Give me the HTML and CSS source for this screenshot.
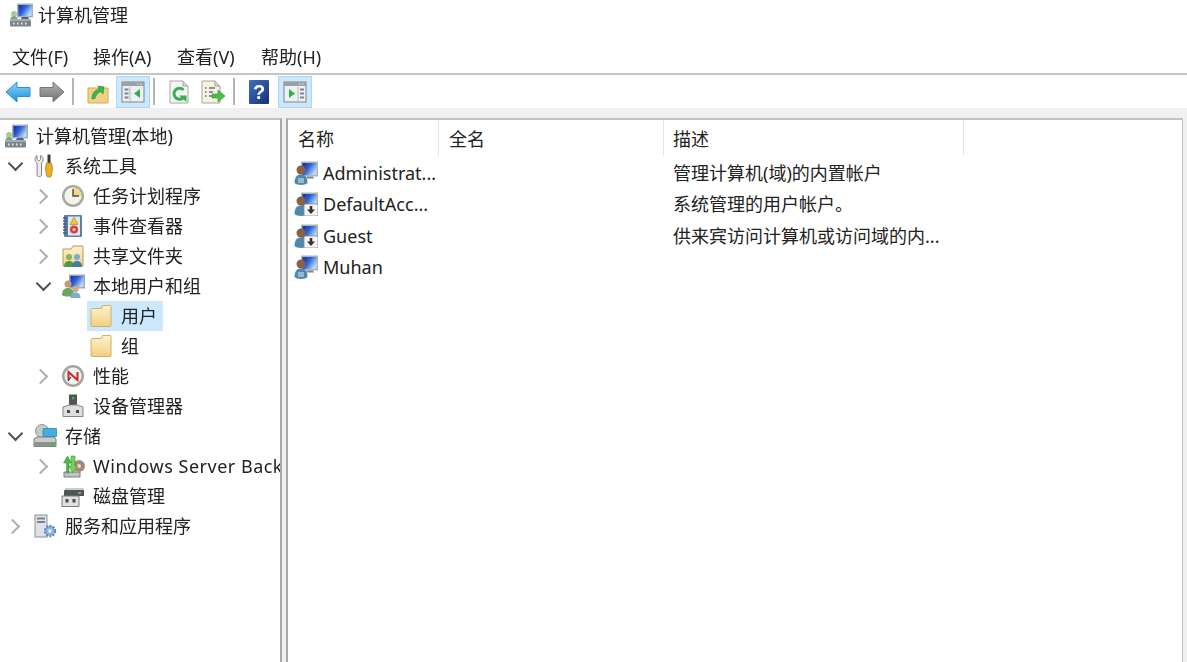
FILE: index.html
```html
<!DOCTYPE html>
<html lang="zh-CN">
  <head>
    <meta charset="utf-8" />
    <meta name="viewport" content="width=device-width, initial-scale=1.0" />
    <title>计算机管理</title>
    <link rel="stylesheet" href="styles.css">
  </head>

  <body>
    <!-- icons, reused with <use> -->
    <svg class="defs" xmlns="http://www.w3.org/2000/svg">
      <defs>
        <linearGradient id="gScreen" x1="0" y1="0" x2="1" y2="0.6">
          <stop offset="0" stop-color="#10289a" />
          <stop offset="0.5" stop-color="#2f66d8" />
          <stop offset="1" stop-color="#c0dbf7" />
        </linearGradient>
        <linearGradient id="gFolder" x1="0" y1="0" x2="0" y2="1">
          <stop offset="0" stop-color="#fdf3cf" />
          <stop offset="1" stop-color="#f1d080" />
        </linearGradient>
        <linearGradient id="gBlue" x1="0" y1="0" x2="0" y2="1">
          <stop offset="0" stop-color="#8fd3fb" />
          <stop offset="1" stop-color="#1c8fe0" />
        </linearGradient>
        <linearGradient id="gGrey" x1="0" y1="0" x2="0" y2="1">
          <stop offset="0" stop-color="#b4b4b4" />
          <stop offset="1" stop-color="#6f6f6f" />
        </linearGradient>
        <linearGradient id="gHelp" x1="0" y1="0" x2="1" y2="1">
          <stop offset="0" stop-color="#3f6fc4" />
          <stop offset="1" stop-color="#182f78" />
        </linearGradient>
      </defs>

      <symbol id="i-computer" viewBox="0 0 24 24">
        <rect x="8" y="0.500" width="16" height="14" fill="#a5b0ba" />
        <rect x="9.500" y="2" width="13" height="11" fill="url(#gScreen)" />
        <path d="M13 14h6l1 2h-8z" fill="#59626b" />
        <circle cx="5" cy="11" r="3" fill="#a8c8a5" />
        <path d="M1.500 16c0-2 2-3 3.500-3s3.500 1 3.500 3z" fill="#7aa57c" />
        <rect x="1" y="16" width="21" height="7.500" rx="1" fill="#79848c" />
        <rect x="1" y="16" width="21" height="2" fill="#a3adb4" />
        <path d="M4 20.500h1.500M8 20.500h1.500M12 20.500h1.500M16 20.500h1.500" stroke="#e6eaec" stroke-width="2" />
      </symbol>

      <symbol id="i-tools" viewBox="0 0 24 24">
        <path d="M4 1.500v4l1.800 1.500 1.800-1.500v-4c2 .8 2.800 2.500 2.600 4.500-.1 1.300-1 2.300-1.700 3v12c0 2-4.400 2-4.400 0V9C2.700 8 2 7 2 5.500 2 3.800 2.700 2.300 4 1.500z" fill="#ececec" stroke="#858585" stroke-width="1" />
        <rect x="14.500" y="0.500" width="3" height="9" fill="#3a3a3a" />
        <path d="M13.500 9h5l1 5-1 8c-.2 1.500-4.800 1.500-5 0l-1-8z" fill="#eaae22" stroke="#b5801a" stroke-width=".8" />
      </symbol>

      <symbol id="i-clock" viewBox="0 0 24 24">
        <circle cx="12" cy="12" r="11" fill="#a9a9a2" />
        <circle cx="12" cy="12" r="8.500" fill="#f6f4ea" />
        <path d="M12 12V3.500A8.500 8.500 0 0 1 20.500 12z" fill="#f4d98b" />
        <path d="M12 5v7h6" fill="none" stroke="#45494d" stroke-width="1.400" />
      </symbol>

      <symbol id="i-event" viewBox="0 0 24 24">
        <rect x="3" y="1" width="18" height="22" rx="1" fill="#5a7fab" />
        <rect x="7" y="2.500" width="12" height="19" fill="#dfe6ee" />
        <path d="M2 4h4M2 7h4M2 10h4M2 13h4M2 16h4M2 19h4" stroke="#4a5d76" stroke-width="1.300" />
        <path d="M13 3l4 7.500H9z" fill="#f0c632" stroke="#a8861a" stroke-width=".6" />
        <circle cx="13" cy="15.500" r="4" fill="#d83f3f" />
        <circle cx="13" cy="15.500" r="1.500" fill="#f7dede" />
      </symbol>

      <symbol id="i-share" viewBox="0 0 24 24">
        <path d="M2 5h8l2-3h10v20H2z" fill="url(#gFolder)" stroke="#b9995a" stroke-width="1" />
        <circle cx="8" cy="13" r="3" fill="#7fb46a" />
        <path d="M3 23c0-4 2-6 5-6s5 2 5 6z" fill="#4f9a49" />
        <circle cx="16" cy="13" r="3" fill="#7fa9c9" />
        <path d="M11 23c0-4 2-6 5-6s5 2 5 6z" fill="#3e7fae" />
      </symbol>

      <symbol id="i-group" viewBox="0 0 24 24">
        <rect x="8" y="0.500" width="16" height="14" fill="#a0aab5" />
        <rect x="9.500" y="2" width="13" height="11" fill="url(#gScreen)" />
        <circle cx="7" cy="10" r="3.500" fill="#c79a6b" />
        <path d="M1 21c0-5 2.500-7 6-7s6 2 6 7c-2 2-10 2-12 0z" fill="#6aa85f" />
        <circle cx="14.500" cy="15" r="3.200" fill="#d3ab83" />
        <path d="M9.500 24c0-4 2-5.500 5-5.500s5 1.500 5 5.500z" fill="#7fadcd" />
      </symbol>

      <symbol id="i-folder" viewBox="0 0 24 24">
        <path d="M2 5.500l1-1h9l1.500-3h8l.5 1V22l-.5.500H3L2 22z" fill="url(#gFolder)" stroke="#cdb06a" stroke-width="1" />
        <path d="M13.500 1.500V5" stroke="#e6d29b" stroke-width="1" />
      </symbol>

      <symbol id="i-perf" viewBox="0 0 24 24">
        <circle cx="12" cy="12" r="11" fill="#a6a6a0" />
        <circle cx="12" cy="12" r="8.500" fill="#f5f3ee" />
        <path d="M7.500 16V8l9 8V8" fill="none" stroke="#c8282c" stroke-width="2" />
        <path d="M7 17l3-4" stroke="#3a3a3a" stroke-width="1.200" />
      </symbol>

      <symbol id="i-device" viewBox="0 0 24 24">
        <rect x="8" y="0.500" width="8" height="11" fill="#4c5550" />
        <rect x="11" y="3" width="2.500" height="2.500" fill="#57a06a" />
        <path d="M2 13l6-2h8l6 2v9.500H2z" fill="#dedede" stroke="#868686" stroke-width="1" />
        <rect x="6" y="16" width="3" height="3" fill="#4a4a4a" />
        <rect x="15" y="16" width="3" height="3" fill="#4a4a4a" />
      </symbol>

      <symbol id="i-storage" viewBox="0 0 24 24">
        <circle cx="9" cy="7" r="6.500" fill="#c4ccc6" stroke="#8d9893" stroke-width="1" />
        <rect x="10" y="4.500" width="14" height="8" rx="1" fill="#3fb0e6" stroke="#2d7fae" stroke-width=".8" />
        <path d="M1 15l3-2h17l2 2v7.500H1z" fill="#c9cdc9" stroke="#777d79" stroke-width="1" />
        <rect x="1" y="18" width="22" height="4.500" fill="#8c938f" />
        <rect x="18" y="19" width="3" height="2.500" fill="#54b14f" />
      </symbol>

      <symbol id="i-backup" viewBox="0 0 24 24">
        <path d="M3 18h16v5H3z" fill="#c4c4c4" stroke="#7a7a7a" stroke-width="1" />
        <circle cx="18" cy="12" r="6" fill="#a48a78" />
        <circle cx="18" cy="12" r="2" fill="#ead9cb" />
        <path d="M5.500 19V9H2.500l4-7 4 7H8v10z" fill="#49bb44" stroke="#2e8a32" stroke-width=".5" />
        <path d="M10 2v10H7.500l4.500 7 4.500-7H14V2z" fill="#74d155" stroke="#2e8a32" stroke-width=".5" />
      </symbol>

      <symbol id="i-disk" viewBox="0 0 24 24">
        <path d="M3 7l2-3h17l1 3v5H3z" fill="#4e5552" />
        <path d="M5 4h17l1 2H4z" fill="#c9cfcb" />
        <rect x="17" y="8" width="3" height="2" fill="#5dbb58" />
        <path d="M1 12h17v10.500H1z" fill="#e0e0e0" stroke="#7a7a7a" stroke-width="1" />
        <rect x="4.500" y="15" width="3" height="3.500" fill="#4a4a4a" />
        <rect x="11.500" y="15" width="3" height="3.500" fill="#4a4a4a" />
      </symbol>

      <symbol id="i-services" viewBox="0 0 24 24">
        <rect x="2" y="1" width="12" height="22" fill="#dfe2e5" stroke="#8a9097" stroke-width="1" />
        <rect x="4" y="3.500" width="8" height="2" fill="#7b828a" />
        <rect x="4" y="7" width="8" height="2" fill="#7b828a" />
        <circle cx="17" cy="17" r="5" fill="#8fb6e6" stroke="#5d88c2" stroke-width="2.400" stroke-dasharray="2 1.200" />
        <circle cx="17" cy="17" r="1.800" fill="#eef4fb" />
      </symbol>

      <symbol id="i-user" viewBox="0 0 24 24">
        <rect x="7" y="0.500" width="17" height="15" fill="#aab4bd" />
        <rect x="8.500" y="2" width="14" height="12" fill="url(#gScreen)" />
        <path d="M13 15.500h6l1 2h-8z" fill="#7c8690" />
        <circle cx="7" cy="9" r="4.500" fill="#8a6242" />
        <path d="M0.500 22c0-6 2.500-8.500 6.500-8.500s6.500 2.500 6.500 8.500c-2 2.500-11 2.500-13 0z" fill="#4e88ad" />
        <path d="M4 17h6v5H4z" fill="#aecfe0" opacity=".7" />
      </symbol>

      <symbol id="i-user-off" viewBox="0 0 24 24">
        <rect x="7" y="0.500" width="17" height="15" fill="#aab4bd" />
        <rect x="8.500" y="2" width="14" height="12" fill="url(#gScreen)" />
        <circle cx="7" cy="9" r="4.500" fill="#8a6242" />
        <path d="M0.500 22c0-6 2.500-8.500 6.500-8.500s6.500 2.500 6.500 8.500c-2 2.500-11 2.500-13 0z" fill="#4e88ad" />
        <rect x="10" y="12" width="14" height="12" rx="1.500" fill="#f4f4f4" stroke="#8a8a8a" stroke-width=".8" />
        <path d="M15.700 14h2.600v3.500H21L17 22l-4-4.500h2.700z" fill="#333" />
      </symbol>

      <symbol id="t-back" viewBox="0 0 26 24">
        <path d="M1 12L12 2v5.500h13v9H12V22z" fill="url(#gBlue)" stroke="#2b8fd6" stroke-width="1" />
      </symbol>
      <symbol id="t-forward" viewBox="0 0 26 24">
        <path d="M25 12L14 2v5.500H1v9h13V22z" fill="url(#gGrey)" stroke="#777" stroke-width="1" />
      </symbol>
      <symbol id="t-up" viewBox="0 0 24 24">
        <path d="M2 8h20v15H2z" fill="#f0d184" stroke="#cfaa5c" stroke-width="1" />
        <path d="M2 8h7l2-2h8l3 2" fill="#f6e2aa" />
        <path d="M6 19c0-6 3-9 7-10l-1-3 6 1-1 7-2-2.500c-3 1-5 3-6 7z" fill="#3db64a" stroke="#2a8a37" stroke-width=".6" />
      </symbol>
      <symbol id="t-left" viewBox="0 0 24 24">
        <rect x="1" y="2" width="22" height="20" fill="#eef1f3" stroke="#8f9599" stroke-width="1.200" />
        <rect x="1" y="2" width="22" height="4" fill="#9aa0a4" />
        <path d="M16 4h1.500M19 4h1.500" stroke="#eee" stroke-width="1.200" />
        <path d="M3.500 9.500h4M3.500 13.500h4M3.500 17.500h4" stroke="#7c848a" stroke-width="2" />
        <path d="M9 7v15" stroke="#b4babe" stroke-width="1" />
        <path d="M19 9v9l-6-4.500z" fill="#2fb045" />
      </symbol>
      <symbol id="t-right" viewBox="0 0 24 24">
        <rect x="1" y="2" width="22" height="20" fill="#eef1f3" stroke="#8f9599" stroke-width="1.200" />
        <rect x="1" y="2" width="22" height="4" fill="#9aa0a4" />
        <path d="M16 4h1.500M19 4h1.500" stroke="#eee" stroke-width="1.200" />
        <path d="M17 9.500h4M17 13.500h4M17 17.500h4" stroke="#7c848a" stroke-width="2" />
        <path d="M15 7v15" stroke="#b4babe" stroke-width="1" />
        <path d="M6 9v9l6-4.500z" fill="#2fb045" />
      </symbol>
      <symbol id="t-refresh" viewBox="0 0 24 24">
        <path d="M3 1h13l5 5v17H3z" fill="#f4f4f4" stroke="#a8a8a8" stroke-width="1" />
        <path d="M16 1v5h5" fill="#d4d4d4" stroke="#a8a8a8" stroke-width="1" />
        <path d="M16.500 17.500a5.500 5.500 0 1 1 0-7.500" fill="none" stroke="#36b04f" stroke-width="3" />
        <path d="M12 15.500h7.500V22z" fill="#36b04f" />
      </symbol>
      <symbol id="t-export" viewBox="0 0 26 24">
        <path d="M2 1h13l5 5v17H2z" fill="#f6f3e2" stroke="#a8a598" stroke-width="1" />
        <path d="M15 1v5h5" fill="#dad7c7" stroke="#a8a598" stroke-width="1" />
        <path d="M5 8h1.500M9 8h6M5 12h1.500M9 12h4M5 16h1.500M9 16h3" stroke="#6c7175" stroke-width="1.400" />
        <path d="M12 14h6v-4l7 6-7 6v-4h-6z" fill="#48bd4a" stroke="#2f9535" stroke-width=".6" />
      </symbol>
    </svg>

    <div class="window">
      <header class="titlebar">
        <svg class="title-icon"><use href="#i-computer" /></svg>
        <span>计算机管理</span>
      </header>

      <nav class="menubar">
        <span class="menu-item">文件(F)</span>
        <span class="menu-item">操作(A)</span>
        <span class="menu-item">查看(V)</span>
        <span class="menu-item">帮助(H)</span>
      </nav>

      <div class="toolbar">
        <div class="tbtn"><svg class="t-arrow"><use href="#t-back" /></svg></div>
        <div class="tbtn"><svg class="t-arrow"><use href="#t-forward" /></svg></div>
        <div class="sep"></div>
        <div class="tbtn"><svg class="t-icon"><use href="#t-up" /></svg></div>
        <div class="tbtn active"><svg class="t-icon"><use href="#t-left" /></svg></div>
        <div class="sep"></div>
        <div class="tbtn"><svg class="t-icon"><use href="#t-refresh" /></svg></div>
        <div class="tbtn"><svg class="t-icon wide"><use href="#t-export" /></svg></div>
        <div class="sep"></div>
        <div class="tbtn">
          <svg class="t-icon tall" viewBox="0 0 22 26">
            <rect x="1" y="1" width="20" height="24" rx="1" fill="url(#gHelp)" />
            <text x="11" y="20" text-anchor="middle" class="help-mark">?</text>
          </svg>
        </div>
        <div class="tbtn active"><svg class="t-icon"><use href="#t-right" /></svg></div>
      </div>

      <div class="panes">
        <aside class="tree">
          <div class="row lv0">
            <svg class="icon"><use href="#i-computer" /></svg><span>计算机管理(本地)</span>
          </div>
          <div class="row lv1">
            <span class="twisty open"></span>
            <svg class="icon"><use href="#i-tools" /></svg><span>系统工具</span>
          </div>
          <div class="row lv2">
            <span class="twisty"></span>
            <svg class="icon"><use href="#i-clock" /></svg><span>任务计划程序</span>
          </div>
          <div class="row lv2">
            <span class="twisty"></span>
            <svg class="icon"><use href="#i-event" /></svg><span>事件查看器</span>
          </div>
          <div class="row lv2">
            <span class="twisty"></span>
            <svg class="icon"><use href="#i-share" /></svg><span>共享文件夹</span>
          </div>
          <div class="row lv2">
            <span class="twisty open"></span>
            <svg class="icon"><use href="#i-group" /></svg><span>本地用户和组</span>
          </div>
          <div class="row lv3 selected">
            <svg class="icon"><use href="#i-folder" /></svg><span>用户</span>
          </div>
          <div class="row lv3">
            <svg class="icon"><use href="#i-folder" /></svg><span>组</span>
          </div>
          <div class="row lv2">
            <span class="twisty"></span>
            <svg class="icon"><use href="#i-perf" /></svg><span>性能</span>
          </div>
          <div class="row lv2">
            <span class="twisty none"></span>
            <svg class="icon"><use href="#i-device" /></svg><span>设备管理器</span>
          </div>
          <div class="row lv1">
            <span class="twisty open"></span>
            <svg class="icon"><use href="#i-storage" /></svg><span>存储</span>
          </div>
          <div class="row lv2">
            <span class="twisty"></span>
            <svg class="icon"><use href="#i-backup" /></svg><span class="latin">Windows Server Back</span>
          </div>
          <div class="row lv2">
            <span class="twisty none"></span>
            <svg class="icon"><use href="#i-disk" /></svg><span>磁盘管理</span>
          </div>
          <div class="row lv1">
            <span class="twisty"></span>
            <svg class="icon"><use href="#i-services" /></svg><span>服务和应用程序</span>
          </div>
        </aside>

        <main class="list">
          <div class="list-head">
            <div class="col col-name">名称</div>
            <div class="col col-full">全名</div>
            <div class="col col-desc">描述</div>
          </div>
          <div class="list-row">
            <div class="cell col-name"><svg class="icon"><use href="#i-user" /></svg><span>Administrat...</span></div>
            <div class="cell col-full"></div>
            <div class="cell col-desc">管理计算机(域)的内置帐户</div>
          </div>
          <div class="list-row">
            <div class="cell col-name"><svg class="icon"><use href="#i-user-off" /></svg><span>DefaultAcc...</span></div>
            <div class="cell col-full"></div>
            <div class="cell col-desc">系统管理的用户帐户。</div>
          </div>
          <div class="list-row">
            <div class="cell col-name"><svg class="icon"><use href="#i-user-off" /></svg><span>Guest</span></div>
            <div class="cell col-full"></div>
            <div class="cell col-desc">供来宾访问计算机或访问域的内...</div>
          </div>
          <div class="list-row">
            <div class="cell col-name"><svg class="icon"><use href="#i-user" /></svg><span>Muhan</span></div>
            <div class="cell col-full"></div>
            <div class="cell col-desc"></div>
          </div>
        </main>
      </div>
    </div>
  </body>
</html>
```

FILE: styles.css
```css
* {
  box-sizing: border-box;
  margin: 0;
}

html,
body {
  height: 100%;
  overflow: hidden;
}

body {
  background: #fff;
  color: #222;
  font-family: "Noto Sans", "Noto Sans CJK SC", sans-serif;
  font-size: 18px;
  line-height: 24px;
}

.defs {
  display: block;
  width: 0;
  height: 0;
}

/* the reference is a slightly soft screenshot */
.window {
  display: flex;
  flex-direction: column;
  height: 100vh;
  filter: blur(0.35px);
}

.titlebar {
  display: flex;
  align-items: center;
  gap: 5px;
  height: 30px;
  padding-left: 9px;
}

.title-icon {
  width: 24px;
  height: 24px;
}

.menubar {
  display: flex;
  align-items: center;
  height: 45px;
  padding: 11px 0 0 12px;
  border-bottom: 2px solid #c6c6c6;
}

.menu-item {
  width: 84px;
}

.menu-item:first-child {
  width: 81px;
}

.toolbar {
  display: flex;
  align-items: flex-end;
  height: 33px;
  padding-left: 1px;
}

.tbtn {
  display: flex;
  align-items: center;
  justify-content: center;
  width: 34px;
  height: 32px;
}

.active {
  margin-left: 1px;
  background: #cce8ff;
  border: 1px solid #a9d6fb;
}

.active:last-child {
  margin-left: 2px;
}

.sep {
  width: 2px;
  height: 27px;
  margin: 0 7px 3px 3px;
  background: #b4b4b4;
}

.t-arrow {
  width: 26px;
  height: 24px;
}

.t-icon {
  width: 24px;
  height: 24px;
}

.t-icon.wide {
  width: 26px;
}

.t-icon.tall {
  width: 22px;
  height: 26px;
}

.help-mark {
  fill: #fff;
  font-family: "Liberation Sans", sans-serif;
  font-size: 20px;
  font-weight: bold;
}

.panes {
  display: flex;
  flex: 1;
  min-height: 0;
  padding: 10px 4px 0 0;
  background: #f0f0f0;
}

.tree {
  flex: none;
  width: 282px;
  padding-top: 1px;
  overflow: hidden;
  background: #fff;
  border-top: 2px solid #c2c2c2;
  border-right: 2px solid #a8a8a8;
}

.row {
  display: flex;
  align-items: center;
  height: 30px;
  white-space: nowrap;
}

.icon {
  flex: none;
  width: 24px;
  height: 24px;
  margin-right: 8px;
}

.lv0 {
  padding-left: 4px;
}

.lv1 {
  padding-left: 4px;
}

.lv2 {
  padding-left: 32px;
}

.lv3 {
  width: fit-content;
  margin-left: 87px;
  padding: 0 6px 0 2px;
}

.selected {
  background: #cce8ff;
}

.twisty {
  position: relative;
  flex: none;
  width: 29px;
  height: 24px;
}

/* chevron, made from two borders */
.twisty::before {
  content: "";
  position: absolute;
  left: 3px;
  top: 7px;
  width: 9px;
  height: 9px;
  border-top: 2px solid #b0b0b0;
  border-right: 2px solid #b0b0b0;
  transform: rotate(45deg);
}

.twisty.open::before {
  left: 6px;
  top: 4px;
  border-color: #505050;
  transform: rotate(135deg);
}

.twisty.none::before {
  display: none;
}

.latin {
  letter-spacing: 0.5px;
}

.list {
  display: flex;
  flex: 1;
  flex-direction: column;
  margin-left: 4px;
  background: #fff;
  border-top: 2px solid #c2c2c2;
  border-left: 2px solid #a8a8a8;
  border-right: 1px solid #c2c2c2;
}

.list-head {
  display: flex;
  height: 37px;
  padding-bottom: 1px;
}

.list-head .col {
  display: flex;
  align-items: center;
  padding: 2px 0 0 10px;
  border-right: 1px solid #e4e4e4;
}

.col-name {
  width: 151px;
}

.col-full {
  width: 225px;
}

.col-desc {
  width: 300px;
}

.list-head .col-desc,
.cell.col-desc {
  padding-left: 9px;
}

.list-row {
  display: flex;
  height: 31.5px;
}

.cell {
  display: flex;
  align-items: center;
  padding-left: 10px;
  white-space: nowrap;
}

.cell.col-name {
  padding-left: 6px;
}

.cell .icon {
  margin-right: 5px;
}
```
